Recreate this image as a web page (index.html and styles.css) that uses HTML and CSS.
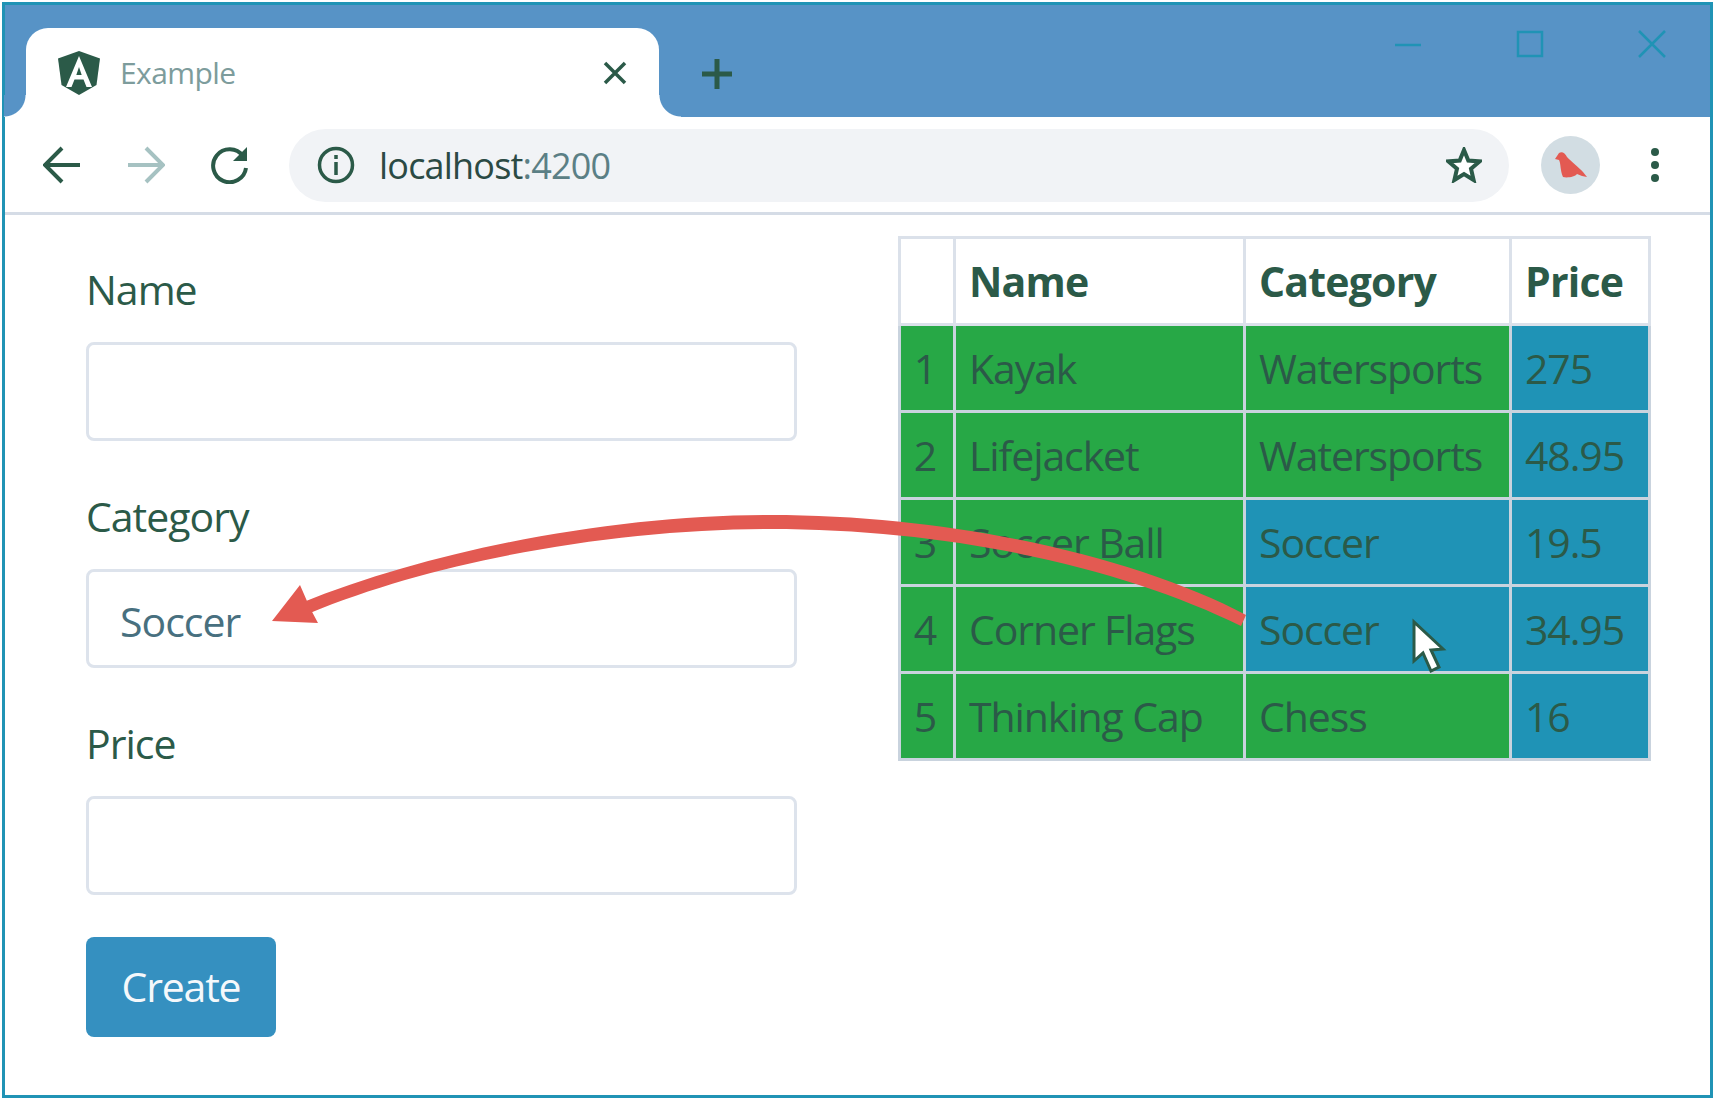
FILE: index.html
```html
<!DOCTYPE html>
<html lang="en">
<head>
<meta charset="utf-8">
<title>Example</title>
<link rel="stylesheet" href="styles.css">
</head>
<body>
<div class="window">
  <header class="tabstrip">
    <div class="tab">
      <svg class="favicon" viewBox="0 0 42 44"><path class="fav-shield" d="M21 0 L42 7.5 L38.5 34 L21 44 L3.5 34 L0 7.5 Z"/><path class="fav-a" d="M21 5 L8 36 H13.5 L16.5 28.5 H25.5 L28.5 36 H34 Z M18.3 24 L21 16 L23.7 24 Z"/></svg>
      <span class="tab-title">Example</span>
      <svg class="tab-close" viewBox="0 0 24 24"><path d="M2 2 L22 22 M22 2 L2 22"/></svg>
    </div>
    <svg class="new-tab" viewBox="0 0 32 32"><path d="M16 1 V31 M1 16 H31"/></svg>
    <div class="win-controls">
      <svg class="win-btn" viewBox="0 0 26 26"><path d="M0 14 H26"/></svg>
      <svg class="win-btn" viewBox="0 0 26 26"><rect x="1" y="1" width="24" height="24"/></svg>
      <svg class="win-btn" viewBox="0 0 26 26"><path d="M0 0 L26 26 M26 0 L0 26"/></svg>
    </div>
  </header>
  <nav class="toolbar">
    <svg class="nav-icon" viewBox="0 0 38 38"><path d="M37 19 H3 M19 2 L2 19 L19 36"/></svg>
    <svg class="nav-icon nav-fwd" viewBox="0 0 38 38"><path d="M1 19 H35 M19 2 L36 19 L19 36"/></svg>
    <svg class="nav-icon" viewBox="0 0 38 38"><path d="M32 10 A16.5 16.5 0 1 0 35 22"/><path class="nav-fill" d="M36 1 V15 H22 Z"/></svg>
    <div class="omnibox">
      <svg class="info" viewBox="0 0 38 38"><circle cx="19" cy="19" r="16.5"/><path d="M19 16 V29 M19 9 V13"/></svg>
      <span class="url">localhost<span class="url-port">:4200</span></span>
      <svg class="star" viewBox="0 0 36 36"><path d="M18 3 L22.3 13.6 L33.5 14.4 L25 21.8 L27.6 33 L18 27 L8.4 33 L11 21.8 L2.5 14.4 L13.7 13.6 Z"/></svg>
    </div>
    <div class="avatar">
      <svg class="bird" viewBox="0 0 32 26"><path d="M0 7 L4 1 C7 -1 10 1 12 5 C16 9 24 16 28 20 L32 25 L27 24 L22 22 C20 25 12 26 8 25 C5 18 6 12 4 8 Z"/></svg>
    </div>
    <div class="kebab"><i></i><i></i><i></i></div>
  </nav>
  <main class="content">
    <form class="form">
      <div class="group"><div class="label">Name</div><div class="field"></div></div>
      <div class="group"><div class="label">Category</div><div class="field">Soccer</div></div>
      <div class="group group-last"><div class="label">Price</div><div class="field"></div></div>
      <div class="button">Create</div>
    </form>
    <table class="table">
      <thead>
        <tr><th class="c0"></th><th class="c1">Name</th><th class="c2">Category</th><th class="c3">Price</th></tr>
      </thead>
      <tbody>
        <tr class="g"><td class="num">1</td><td>Kayak</td><td>Watersports</td><td class="b">275</td></tr>
        <tr class="g"><td class="num">2</td><td>Lifejacket</td><td>Watersports</td><td class="b">48.95</td></tr>
        <tr class="g"><td class="num">3</td><td>Soccer Ball</td><td class="b">Soccer</td><td class="b">19.5</td></tr>
        <tr class="g"><td class="num">4</td><td>Corner Flags</td><td class="b">Soccer</td><td class="b">34.95</td></tr>
        <tr class="g"><td class="num">5</td><td>Thinking Cap</td><td>Chess</td><td class="b">16</td></tr>
      </tbody>
    </table>
  </main>
  <svg class="overlay" viewBox="0 0 1716 1100">
    <path class="arrow-shaft" d="M1246 615 C1140 559 960 515 770 515 C620 515 440 547 301 603 L310 613 C440 559 620 529 770 529 C960 529 1130 571 1241 626 Z"/>
    <path class="arrow-head" d="M272 621 L300 585 L310 608 L318 623 Z"/>
    <path class="cursor" d="M1414 622 V661 L1423 653 L1431 671 L1439 667 L1431 650 L1443 649 Z"/>
  </svg>
</div>
</body>
</html>
```
FILE: styles.css
```css
* { box-sizing: border-box; }
html, body { margin: 0; padding: 0; background: #fff; }
body { width: 1716px; height: 1100px; overflow: hidden; font-family: "Open Sans", "Noto Sans", sans-serif; color: #2b5a48; }
.window { position: relative; margin: 2px 0 0 2px; width: 1711px; height: 1096px; border: 3px solid #2093b5; background: #fff; }

.tabstrip { height: 112px; background: #5793c6; display: flex; align-items: flex-end; position: relative; }
.tab { position: relative; margin-left: 21px; width: 633px; height: 89px; background: #fff; border-radius: 22px 22px 0 0; display: flex; align-items: center; padding: 0 32px 0 32px; }
.tab::before, .tab::after { content: ""; position: absolute; bottom: 0; width: 22px; height: 22px; }
.tab::before { left: -22px; background: radial-gradient(circle at 0 0, #5793c6 21px, #fff 22px); }
.tab::after { right: -22px; background: radial-gradient(circle at 100% 0, #5793c6 21px, #fff 22px); }
.favicon { width: 42px; height: 44px; flex: none; }
.fav-shield { fill: #2b5a48; }
.fav-a { fill: #fff; fill-rule: evenodd; }
.tab-title { margin-left: 20px; font-size: 30px; line-height: 40px; color: #7d9c9c; letter-spacing: -0.6px; }
.tab-close { margin-left: auto; width: 24px; height: 24px; fill: none; stroke: #2b5a48; stroke-width: 3.5; }
.new-tab { width: 32px; height: 32px; margin: 0 0 27px 42px; fill: none; stroke: #2b5a48; stroke-width: 5; }
.win-controls { margin-left: auto; align-self: flex-start; display: flex; gap: 96px; padding: 26px 45px 0 0; }
.win-btn { width: 26px; height: 26px; fill: none; stroke: #2093b5; stroke-width: 2.5; overflow: visible; }

.toolbar { height: 98px; border-bottom: 3px solid #d5dce6; display: flex; align-items: center; padding: 1px 0 0 38px; }
.nav-icon { width: 38px; height: 38px; flex: none; margin-right: 46px; fill: none; stroke: #2b5a48; stroke-width: 4; }
.nav-fwd { stroke: #a6c2c2; }
.nav-fill { fill: #2b5a48; stroke: none; }
.omnibox { margin-left: -6px; width: 1220px; height: 73px; border-radius: 37px; background: #f1f3f6; display: flex; align-items: center; padding: 0 27px 0 28px; flex: none; }
.info { width: 38px; height: 38px; flex: none; fill: none; stroke: #2b5a48; stroke-width: 3.5; }
.url { margin-left: 24px; font-size: 36px; color: #2b4a44; letter-spacing: -0.8px; }
.url-port { color: #5b7f85; }
.star { margin-left: auto; width: 36px; height: 36px; fill: #fff; stroke: #2b5a48; stroke-width: 4; }
.avatar { margin-left: 32px; width: 59px; height: 58px; border-radius: 50%; background: #d2dde3; display: flex; align-items: center; justify-content: center; flex: none; }
.bird { width: 32px; height: 26px; fill: #e35a52; }
.kebab { margin-left: 51px; width: 8px; display: flex; flex-direction: column; gap: 5px; }
.kebab i { display: block; width: 8px; height: 8px; border-radius: 50%; background: #2b5a48; }

.content { display: flex; align-items: flex-start; padding: 21px 0 0 81px; }
.form { width: 711px; flex: none; padding-top: 29px; font-size: 41px; }
.group { margin-bottom: 51px; }
.group-last { margin-bottom: 42px; }
.label { height: 50px; line-height: 48px; margin-bottom: 27px; letter-spacing: -1px; }
.field { height: 99px; border: 3px solid #dde3ec; border-radius: 8px; padding: 0 31px; line-height: 99px; color: #48707f; letter-spacing: -1px; }
.button { width: 190px; height: 100px; border-radius: 8px; background: #3590c0; color: #f4f8fb; text-align: center; line-height: 98px; letter-spacing: -1.2px; }

.table { margin-left: 101px; width: 750px; border-collapse: collapse; table-layout: fixed; font-size: 41px; }
.table th, .table td { border: 3px solid #c9d3de; padding: 0 0 0 13px; height: 87px; text-align: left; letter-spacing: -1.1px; white-space: nowrap; overflow: hidden; }
.table th { border-color: #dbe1ea; font-weight: 700; height: 87px; letter-spacing: -0.8px; }
.c0 { width: 55px; }
.c1 { width: 290px; }
.c2 { width: 266px; }
.c3 { width: 139px; }
.table .num { padding: 0 4px 0 0; text-align: center; }
.g td { background: #27a846; }
.table .b { background: #1f93b6; }

.overlay { position: absolute; left: -5px; top: -5px; width: 1716px; height: 1100px; pointer-events: none; }
.arrow-shaft { fill: #e35a52; }
.arrow-head { fill: #e35a52; }
.cursor { fill: #fff; stroke: #2b5a48; stroke-width: 3; }
```
